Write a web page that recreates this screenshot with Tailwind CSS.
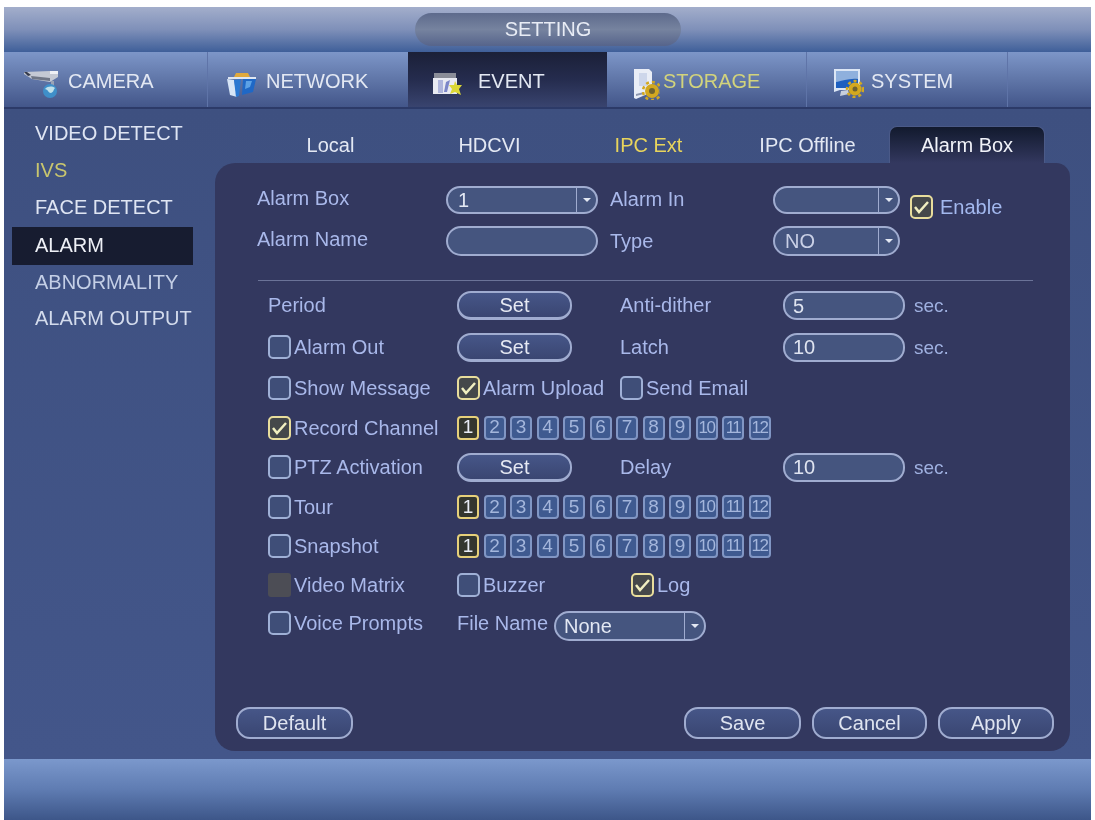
<!DOCTYPE html>
<html lang="en">
<head>
  <meta charset="UTF-8" />
  <title>SETTING</title>
  <script src="https://cdn.jsdelivr.net/npm/@tailwindcss/browser@4"></script>
</head>
<body class="bg-white">
  <div class="w-[1095px] h-[820px] overflow-hidden pt-[7px] pl-[4px] font-['Liberation_Sans',Arial,sans-serif] text-[20px] text-[#a9b8ea] blur-[0.7px]">
    <div class="w-[1087px] h-[813px] flex flex-col">

      <!-- title bar -->
      <div class="h-[45px] pt-[6px] pl-[411px] bg-gradient-to-b from-[#a3aecb] via-[#7f90b9] to-[#3f5f99]">
        <div class="w-[266px] h-[33px] rounded-full bg-gradient-to-b from-[#5d6a8c] via-[#76839f] to-[#56648b] flex items-center justify-center text-[#e8ecf5] pb-[2px]">SETTING</div>
      </div>

      <!-- top tabs -->
      <div class="h-[57px] flex text-[#e3e8f3] border-b-2 border-[#2c3a68] bg-gradient-to-b from-[#7d96c8] via-[#6076a8] to-[#43568a]">
        <div class="w-[203px] flex items-center pl-[19px] gap-[9px] pt-[2px]">
          <svg class="w-[36px] h-[30px] mt-[7px]" viewBox="0 0 36 30">
            <path d="M1 3l26-1 8 1v5l-8 5-18-3-8-5z" fill="#c4c9d4"/>
            <path d="M8 7l19 2v3L9 10z" fill="#6f7686"/>
            <path d="M1 3l4 4 3-1-4-3z" fill="#353b4c"/>
            <path d="M27 2h8v3h-8z" fill="#eef0f5"/>
            <path d="M28 12h3v5h-3z" fill="#9aa3b5"/>
            <circle cx="27" cy="22" r="7" fill="#3f8fc9"/>
            <path d="M22 20c3-3 7-3 10-1-2 2-1 4-4 5-3 0-2-3-6-4z" fill="#bfe0ea"/>
          </svg>
          <span>CAMERA</span>
        </div>
        <div class="w-[201px] flex items-center pl-[18px] gap-[8px] pt-[2px] border-l border-[#5f74a8]">
          <svg class="w-[32px] h-[26px] mt-[8px]" viewBox="0 0 32 26">
            <path d="M2 5h28v2H2z" fill="#dfe6f2"/>
            <path d="M10 1h12l2 4H8z" fill="#e0a93c"/>
            <path d="M1 7l7 1 3 17-7-2z" fill="#d7e5f6"/>
            <path d="M8 8l7-1-2 17-3 1z" fill="#2a78d2"/>
            <path d="M17 7l13 0-3 13-11 3z" fill="#1f68c6"/>
            <path d="M20 9l6 0-2 6-5 2z" fill="#5da2e6"/>
          </svg>
          <span>NETWORK</span>
        </div>
        <div class="w-[199px] flex items-center pl-[24px] gap-[14px] pt-[2px] bg-gradient-to-b from-[#1b2038] via-[#252c4e] to-[#39446f]">
          <svg class="w-[32px] h-[24px] mt-[6px]" viewBox="0 0 32 24">
            <path d="M2 1h22v5H2z" fill="#8a8d98"/>
            <path d="M1 6h24v16H1z" fill="#e8eaf2"/>
            <path d="M6 8h5v13H6z" fill="#aeb5dc"/>
            <path d="M14 10l4-2-3 12h-3z" fill="#7b86c8"/>
            <path d="M23 9l2 4 5 0-3 4 2 6-6-3-5 2 2-5-3-4h5z" fill="#dcd834"/>
          </svg>
          <span>EVENT</span>
        </div>
        <div class="w-[199px] flex items-center pl-[26px] gap-[3px] pt-[2px] text-[#d2d37c]">
          <svg class="w-[27px] h-[32px] mt-[7px]" viewBox="0 0 27 32">
            <path d="M1 1h15l3 3v20L3 31 1 30z" fill="#e9edf6"/>
            <path d="M6 5h8v13H6z" fill="#cdd6ea"/>
            <path d="M3 26l8-2v2l-8 2z" fill="#8c96ae"/>
            <circle cx="19" cy="23" r="7" fill="#d3a81f"/>
            <circle cx="19" cy="23" r="9" fill="none" stroke="#d3a81f" stroke-width="2.5" stroke-dasharray="3 3"/>
            <circle cx="19" cy="23" r="3" fill="#6f6330"/>
          </svg>
          <span>STORAGE</span>
        </div>
        <div class="w-[201px] flex items-center pl-[26px] gap-[7px] pt-[2px] border-l border-[#5f74a8]">
          <svg class="w-[31px] h-[30px] mt-[5px]" viewBox="0 0 31 30">
            <path d="M1 1h26v21H7l-6 2z" fill="#dce6f5"/>
            <path d="M3 3h22v8L3 14z" fill="#8fb0dd"/>
            <path d="M3 14c7-1 13-4 22-3v9H3z" fill="#1d5fc0"/>
            <path d="M8 23l7-1 1 4-9 2z" fill="#c7cfdc"/>
            <circle cx="22" cy="21" r="6.5" fill="#d3a81f"/>
            <circle cx="22" cy="21" r="8" fill="none" stroke="#d3a81f" stroke-width="2.5" stroke-dasharray="3 3"/>
            <circle cx="22" cy="21" r="2.5" fill="#6f6330"/>
          </svg>
          <span>SYSTEM</span>
        </div>
        <div class="flex-1 border-l border-[#5f74a8]"></div>
      </div>

      <!-- body -->
      <div class="h-[650px] flex bg-gradient-to-b from-[#3e5080] to-[#43568a]">
        <div class="w-[211px] pt-[7px] text-[#dfe5f3]">
          <div class="h-[37px] flex items-center pl-[31px] pb-[4px]">VIDEO DETECT</div>
          <div class="h-[37px] flex items-center pl-[31px] pb-[4px] text-[#c9c66e]">IVS</div>
          <div class="h-[37px] flex items-center pl-[31px] pb-[4px]">FACE DETECT</div>
          <div class="h-[38px] ml-[8px] w-[181px] flex items-center pl-[23px] pb-[2px] bg-[#171c30] text-[#eef0f6]">ALARM</div>
          <div class="h-[37px] flex items-center pl-[31px] pb-[4px] text-[#c4cfe6]">ABNORMALITY</div>
          <div class="h-[37px] flex items-center pl-[31px] pb-[5px] text-[#d3dbec] whitespace-nowrap">ALARM OUTPUT</div>
        </div>

        <div class="w-[855px]">
          <div class="h-[37px] mt-[17px] pl-[36px] flex text-[#e3e8f3]">
            <div class="w-[159px] flex items-center justify-center">Local</div>
            <div class="w-[159px] flex items-center justify-center">HDCVI</div>
            <div class="w-[159px] flex items-center justify-center text-[#e8d45c]">IPC Ext</div>
            <div class="w-[159px] flex items-center justify-center">IPC Offline</div>
            <div class="w-[156px] ml-[2px] flex items-center justify-center rounded-t-[8px] border-t border-x border-[#4b5a88] bg-gradient-to-b from-[#121a2e] to-[#33385f] text-[#f0f2f8]">Alarm Box</div>
          </div>

          <div class="h-[588px] rounded-[20px] rounded-tr-[14px] bg-[#33385f] pt-[23px]">
            <!-- alarm box form -->
            <div class="h-[28px] flex items-center pl-[42px]">
              <span class="w-[189px] mb-[4px]">Alarm Box</span>
              <div class="w-[152px] h-[28px] flex items-center pl-[10px] rounded-[14px] border-2 border-[#a0acd0] bg-[#45557f] text-[#e3e8f3]">
                <span class="flex-1">1</span>
                <span class="w-[20px] h-full flex items-center justify-center border-l border-[#a0acd0]"><span class="w-0 h-0 border-x-[4px] border-t-[4px] border-x-transparent border-t-[#e3e8f3]"></span></span>
              </div>
              <span class="w-[163px] ml-[12px] mb-[2px]">Alarm In</span>
              <div class="w-[127px] h-[28px] flex items-center pl-[10px] rounded-[14px] border-2 border-[#a0acd0] bg-[#45557f]">
                <span class="flex-1"></span>
                <span class="w-[20px] h-full flex items-center justify-center border-l border-[#a0acd0]"><span class="w-0 h-0 border-x-[4px] border-t-[4px] border-x-transparent border-t-[#e3e8f3]"></span></span>
              </div>
              <span class="mt-[14px] ml-[10px] w-[23px] h-[24px] rounded-[5px] border-2 border-[#e8dd9c] bg-[#45484a] flex items-center justify-center"><svg class="w-[17px] h-[14px]" viewBox="0 0 17 14"><path d="M2 7l4 5 9-10" fill="none" stroke="#f1efc0" stroke-width="2.5"/></svg></span>
              <span class="mt-[14px] ml-[7px] text-[#a3b8ee]">Enable</span>
            </div>
            <div class="h-[30px] mt-[12px] flex items-center pl-[42px]">
              <span class="w-[189px] mb-[5px]">Alarm Name</span>
              <div class="w-[152px] h-[30px] rounded-[15px] border-2 border-[#a0acd0] bg-[#45557f]"></div>
              <span class="w-[163px] ml-[12px]">Type</span>
              <div class="w-[127px] h-[30px] flex items-center pl-[10px] rounded-[15px] border-2 border-[#a0acd0] bg-[#45557f] text-[#c9d0e6]">
                <span class="flex-1">NO</span>
                <span class="w-[20px] h-full flex items-center justify-center border-l border-[#a0acd0]"><span class="w-0 h-0 border-x-[4px] border-t-[4px] border-x-transparent border-t-[#e3e8f3]"></span></span>
              </div>
            </div>

            <div class="h-px mt-[24px] ml-[43px] w-[775px] bg-[#6b7398]"></div>

            <!-- settings rows -->
            <div class="mt-[4px] pl-[53px]">
              <div class="h-[41px] flex items-center">
                <span class="w-[189px] mb-[2px]">Period</span>
                <div class="w-[115px] h-[29px] flex items-center justify-center rounded-[14px] border-2 border-b-[3px] border-[#a0acd0] bg-gradient-to-b from-[#465688] to-[#3a4672] text-[#e6e9f3]">Set</div>
                <span class="w-[163px] ml-[48px] mb-[2px]">Anti-dither</span>
                <div class="w-[122px] h-[29px] flex items-center pl-[8px] rounded-[14px] border-2 border-[#a0acd0] bg-[#45557f] text-[#dfe4f0]">5</div>
                <span class="ml-[9px] mt-[2px] text-[#9fb0e0] text-[19px]">sec.</span>
              </div>
              <div class="h-[42px] flex items-center">
                <div class="w-[189px] flex items-center gap-[3px]"><span class="w-[23px] h-[24px] rounded-[5px] border-2 border-[#9fb0d6] bg-[#3f4e78]"></span>Alarm Out</div>
                <div class="w-[115px] h-[29px] flex items-center justify-center rounded-[14px] border-2 border-b-[3px] border-[#a0acd0] bg-gradient-to-b from-[#465688] to-[#3a4672] text-[#e6e9f3]">Set</div>
                <span class="w-[163px] ml-[48px]">Latch</span>
                <div class="w-[122px] h-[29px] flex items-center pl-[8px] rounded-[14px] border-2 border-[#a0acd0] bg-[#45557f] text-[#dfe4f0]">10</div>
                <span class="ml-[9px] mt-[2px] text-[#9fb0e0] text-[19px]">sec.</span>
              </div>
              <div class="h-[40px] flex items-center">
                <div class="w-[189px] flex items-center gap-[3px]"><span class="w-[23px] h-[24px] rounded-[5px] border-2 border-[#9fb0d6] bg-[#3f4e78]"></span>Show Message</div>
                <div class="w-[163px] flex items-center gap-[3px] whitespace-nowrap"><span class="w-[23px] h-[24px] rounded-[5px] border-2 border-[#e8dd9c] bg-[#45484a] flex items-center justify-center"><svg class="w-[17px] h-[14px]" viewBox="0 0 17 14"><path d="M2 7l4 5 9-10" fill="none" stroke="#f1efc0" stroke-width="2.5"/></svg></span>Alarm Upload</div>
                <div class="flex items-center gap-[3px]"><span class="w-[23px] h-[24px] rounded-[5px] border-2 border-[#9fb0d6] bg-[#3f4e78]"></span>Send Email</div>
              </div>
              <div class="h-[39px] flex items-center">
                <div class="w-[189px] flex items-center gap-[3px] whitespace-nowrap"><span class="w-[23px] h-[24px] rounded-[5px] border-2 border-[#e8dd9c] bg-[#45484a] flex items-center justify-center"><svg class="w-[17px] h-[14px]" viewBox="0 0 17 14"><path d="M2 7l4 5 9-10" fill="none" stroke="#f1efc0" stroke-width="2.5"/></svg></span>Record Channel</div>
                <div class="channels flex gap-[4.5px]"></div>
              </div>
              <div class="h-[40px] flex items-center">
                <div class="w-[189px] flex items-center gap-[3px]"><span class="w-[23px] h-[24px] rounded-[5px] border-2 border-[#9fb0d6] bg-[#3f4e78]"></span>PTZ Activation</div>
                <div class="w-[115px] h-[29px] flex items-center justify-center rounded-[14px] border-2 border-b-[3px] border-[#a0acd0] bg-gradient-to-b from-[#465688] to-[#3a4672] text-[#e6e9f3]">Set</div>
                <span class="w-[163px] ml-[48px]">Delay</span>
                <div class="w-[122px] h-[29px] flex items-center pl-[8px] rounded-[14px] border-2 border-[#a0acd0] bg-[#45557f] text-[#dfe4f0]">10</div>
                <span class="ml-[9px] mt-[2px] text-[#9fb0e0] text-[19px]">sec.</span>
              </div>
              <div class="h-[40px] flex items-center">
                <div class="w-[189px] flex items-center gap-[3px]"><span class="w-[23px] h-[24px] rounded-[5px] border-2 border-[#9fb0d6] bg-[#3f4e78]"></span>Tour</div>
                <div class="channels flex gap-[4.5px]"></div>
              </div>
              <div class="h-[38px] flex items-center">
                <div class="w-[189px] flex items-center gap-[3px]"><span class="w-[23px] h-[24px] rounded-[5px] border-2 border-[#9fb0d6] bg-[#3f4e78]"></span>Snapshot</div>
                <div class="channels flex gap-[4.5px]"></div>
              </div>
              <div class="h-[39px] flex items-center">
                <div class="w-[189px] flex items-center gap-[3px]"><span class="w-[23px] h-[24px] rounded-[3px] bg-[#4c4d55]"></span>Video Matrix</div>
                <div class="w-[174px] flex items-center gap-[3px]"><span class="w-[23px] h-[24px] rounded-[5px] border-2 border-[#9fb0d6] bg-[#3f4e78]"></span>Buzzer</div>
                <div class="flex items-center gap-[3px]"><span class="w-[23px] h-[24px] rounded-[5px] border-2 border-[#e8dd9c] bg-[#45484a] flex items-center justify-center"><svg class="w-[17px] h-[14px]" viewBox="0 0 17 14"><path d="M2 7l4 5 9-10" fill="none" stroke="#f1efc0" stroke-width="2.5"/></svg></span>Log</div>
              </div>
              <div class="h-[38px] flex items-center">
                <div class="w-[189px] flex items-center gap-[3px]"><span class="w-[23px] h-[24px] rounded-[5px] border-2 border-[#9fb0d6] bg-[#3f4e78]"></span>Voice Prompts</div>
                <span class="w-[97px] whitespace-nowrap">File Name</span>
                <div class="w-[152px] h-[30px] mt-[6px] flex items-center pl-[8px] rounded-[15px] border-2 border-[#a0acd0] bg-[#45557f] text-[#e3e8f3]">
                  <span class="flex-1">None</span>
                  <span class="w-[20px] h-full flex items-center justify-center border-l border-[#a0acd0]"><span class="w-0 h-0 border-x-[4px] border-t-[4px] border-x-transparent border-t-[#e3e8f3]"></span></span>
                </div>
              </div>
            </div>

            <!-- bottom buttons -->
            <div class="mt-[65px] ml-[21px] flex text-[#dfe4f0]">
              <div class="w-[117px] h-[32px] flex items-center justify-center rounded-[14px] border-2 border-[#a0acd0] bg-gradient-to-b from-[#465688] to-[#3a4672]">Default</div>
              <div class="w-[117px] h-[32px] ml-[331px] flex items-center justify-center rounded-[14px] border-2 border-[#a0acd0] bg-gradient-to-b from-[#465688] to-[#3a4672]">Save</div>
              <div class="w-[115px] h-[32px] ml-[11px] flex items-center justify-center rounded-[14px] border-2 border-[#a0acd0] bg-gradient-to-b from-[#465688] to-[#3a4672]">Cancel</div>
              <div class="w-[116px] h-[32px] ml-[11px] flex items-center justify-center rounded-[14px] border-2 border-[#a0acd0] bg-gradient-to-b from-[#465688] to-[#3a4672]">Apply</div>
            </div>
          </div>
        </div>
      </div>

      <!-- footer -->
      <div class="flex-1 bg-gradient-to-b from-[#7b98cc] via-[#5f7cb2] to-[#3d5689]"></div>
    </div>
  </div>

  <script>
    document.querySelectorAll(".channels").forEach((row) => {
      for (let n = 1; n <= 12; n++) {
        const box = document.createElement("span");
        box.textContent = n;
        box.className = n === 1
          ? "w-[22px] h-[24px] flex items-center justify-center rounded-[4px] border-2 border-[#e6d07a] bg-[#33362f] text-[#e8ecf5] text-[19px]"
          : n < 10
            ? "w-[22px] h-[24px] flex items-center justify-center rounded-[4px] border-2 border-[#8196c4] bg-[#3f5a90] text-[#a4b6dc] text-[19px]"
            : "w-[22px] h-[24px] flex items-center justify-center rounded-[4px] border-2 border-[#8196c4] bg-[#3f5a90] text-[#a4b6dc] text-[17px] tracking-[-1.5px]";
        row.appendChild(box);
      }
    });
  </script>
</body>
</html>
